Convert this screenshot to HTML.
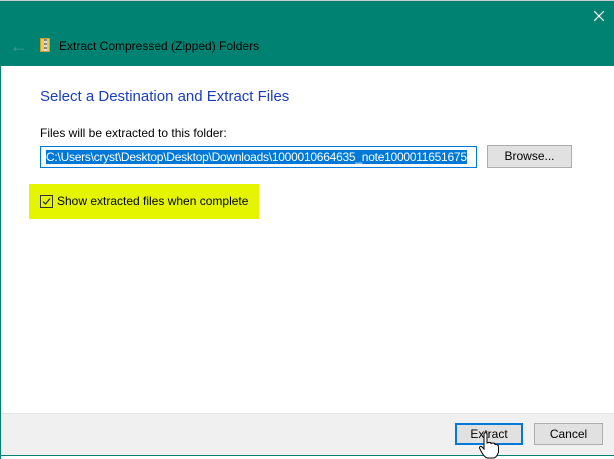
<!DOCTYPE html><html><head><style>
body{margin:0;width:614px;height:459px;position:relative;overflow:hidden;background:#fff;font-family:"Liberation Sans",sans-serif;font-size:12px;color:#000}
.a{position:absolute}
</style></head><body>
<div class="a" style="left:0;top:0;width:614px;height:66px;background:#008272;border-top:1px solid #ccc;box-sizing:border-box"></div>
<div class="a" style="left:0;top:66px;width:1px;height:393px;background:#008272"></div>
<div class="a" style="left:10px;top:36px;color:#3e9a8e;font-size:18px">&#8592;</div>
<div class="a" style="left:40px;top:38px;width:10px;height:14px;background:#f2c94c;border:1px solid #c9a030;box-sizing:border-box"><div style="margin-left:3px;width:3px;height:12px;background:repeating-linear-gradient(#888 0 2px,#ddd 2px 4px)"></div></div>
<div class="a" style="left:59px;top:39px;color:#000;font-size:12px">Extract Compressed (Zipped) Folders</div>
<svg class="a" style="left:174px;top:0" width="0" height="0"></svg>
<svg class="a" style="left:594px;top:11px" width="10" height="10"><path d="M0 0L10 10M10 0L0 10" stroke="#fff" stroke-width="1.2"/></svg>
<div class="a" style="left:40px;top:88px;color:#1a3dbd;font-size:15px">Select a Destination and Extract Files</div>
<div class="a" style="left:40px;top:126px">Files will be extracted to this folder:</div>
<div class="a" style="left:40px;top:146px;width:437px;height:22px;border:1px solid #0078d7;box-sizing:border-box;overflow:hidden"><span style="position:absolute;left:5px;top:3px;background:#0078d7;color:#fff;white-space:nowrap;letter-spacing:-0.25px">C:\Users\cryst\Desktop\Desktop\Downloads\1000010664635_note1000011651675</span></div>
<div class="a" style="left:487px;top:145px;width:85px;height:23px;background:#e1e1e1;border:1px solid #adadad;box-sizing:border-box;text-align:center;line-height:21px">Browse...</div>
<div class="a" style="left:29px;top:184px;width:230px;height:35px;background:#e5f500"></div>
<div class="a" style="left:40px;top:195px;width:13px;height:13px;border:1px solid #333;box-sizing:border-box"></div>
<svg class="a" style="left:42px;top:197px" width="9" height="9"><path d="M1 4.5L3.5 7L8 1.5" stroke="#222" stroke-width="1.2" fill="none"/></svg>
<div class="a" style="left:57px;top:194px">Show extracted files when complete</div>
<div class="a" style="left:1px;top:413px;width:613px;height:42px;background:#f0f0f0;border-top:1px solid #e3e3e3"></div>
<div class="a" style="left:1px;top:455px;width:613px;height:1px;background:#008272"></div>
<div class="a" style="left:455px;top:423px;width:68px;height:22px;background:#e1e1e1;border:2px solid #0078d7;box-sizing:border-box;text-align:center;line-height:18px">Extract</div>
<div class="a" style="left:534px;top:423px;width:69px;height:22px;background:#e1e1e1;border:1px solid #adadad;box-sizing:border-box;text-align:center;line-height:20px">Cancel</div>
<svg class="a" style="left:478px;top:432px" width="22" height="27"><path d="M6 1.5Q8 0 9 1.5V11L11 10.5Q13 10 13 11.5L15 11Q17 11 17 12.5L18.5 12.5Q20.5 13 20.5 15V20Q19 25 16 26H9Q6 25 3 19L1.5 16Q1.5 14 3.5 14.5L6 17Z" fill="#fff" stroke="#000" stroke-width="1"/></svg>
</body></html>
